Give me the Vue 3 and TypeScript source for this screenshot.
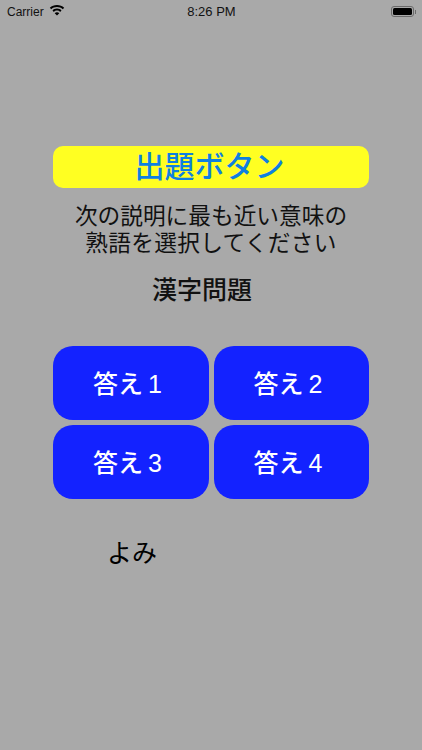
<script setup lang="ts">
const answers: string[] = ['答え 1', '答え 2', '答え 3', '答え 4']
</script>

<template>
  <div class="screen">
    <div class="status">
      <div class="status-left">
        <span>Carrier</span>
        <svg class="wifi" width="16" height="12" viewBox="0 0 16 12">
          <path d="M8 1C5.200 1 2.700 2 .8 3.800l1.400 1.500C3.700 3.900 5.700 3 8 3s4.300.9 5.800 2.300l1.400-1.500C13.300 2 10.800 1 8 1z" fill="#000" />
          <path d="M8 4.600c-1.800 0-3.400.7-4.500 1.800l1.400 1.500C5.700 7.100 6.800 6.600 8 6.600s2.300.5 3.100 1.300l1.400-1.500C11.400 5.300 9.800 4.600 8 4.600z" fill="#000" />
          <path d="M8 8.200c-.9 0-1.700.4-2.300 1L8 11.600l2.300-2.400c-.6-.6-1.400-1-2.300-1z" fill="#000" />
        </svg>
      </div>
      <span class="clock">8:26 PM</span>
      <div class="battery">
        <div class="battery-body"><div class="battery-fill"></div></div>
        <div class="battery-cap"></div>
      </div>
    </div>

    <main class="content">
      <button class="quiz-btn">出題ボタン</button>
      <p class="desc">次の説明に最も近い意味の<br /><span class="desc-second">熟語を選択してください</span></p>
      <h1 class="kanji">漢字問題</h1>
      <div class="grid">
        <button v-for="a in answers" :key="a" class="answer">{{ a }}</button>
      </div>
      <p class="yomi">よみ</p>
    </main>
  </div>
</template>

<style>
html, body { margin: 0; padding: 0; }
</style>

<style scoped>
.screen {
  width: 422px;
  height: 750px;
  background: #a9a9a9;
  overflow: hidden;
  font-family: "Liberation Sans", "Noto Sans CJK JP", sans-serif;
  color: #000;
}
.status {
  height: 22px;
  display: grid;
  grid-template-columns: 1fr auto 1fr;
  align-items: center;
  padding: 1px 6px 0 7px;
  box-sizing: border-box;
  font-size: 12px;
  color: #111;
}
.status-left { display: flex; align-items: center; gap: 5px; }
.wifi { margin-top: -3px; }
.clock { font-size: 13px; }
.battery { display: flex; align-items: center; justify-content: flex-end; gap: 1px; }
.battery-body {
  border: 1px solid #6a6a6a;
  border-radius: 3px;
  padding: 1px;
  width: 19px;
  height: 7px;
}
.battery-fill { width: 100%; height: 100%; background: #000; border-radius: 1.500px; }
.battery-cap { width: 1px; height: 4px; background: #6a6a6a; }

.content {
  display: flex;
  flex-direction: column;
  padding: 124px 53px 0;
}
.quiz-btn {
  height: 42px;
  border: none;
  border-radius: 10px;
  background: #ffff22;
  color: #0f80e0;
  font: inherit;
  font-size: 30px;
  font-weight: 500;
  line-height: 42px;
  padding: 0 3px 0 0;
}
.desc {
  margin: 15px -20px 0;
  font-size: 22.700px;
  line-height: 27px;
  text-align: center;
  color: #111;
}
.desc-second { letter-spacing: 0.300px; }
.kanji {
  margin: 18px 0 0;
  font-size: 25px;
  line-height: 30px;
  font-weight: 500;
  text-align: center;
  color: #111;
  transform: translateX(-9px);
}
.grid {
  margin-top: 41px;
  display: grid;
  grid-template-columns: 156px 155px;
  grid-auto-rows: 74px;
  column-gap: 5px;
  row-gap: 5px;
}
.answer {
  border: none;
  border-radius: 20px;
  background: #1322ff;
  color: #fff;
  font: inherit;
  font-size: 25px;
  font-weight: 500;
  word-spacing: -2px;
  padding: 0 7px 3px 0;
}
.yomi {
  margin: 37px 0 0 54px;
  font-size: 25px;
  line-height: 34px;
  color: #000;
}
</style>
